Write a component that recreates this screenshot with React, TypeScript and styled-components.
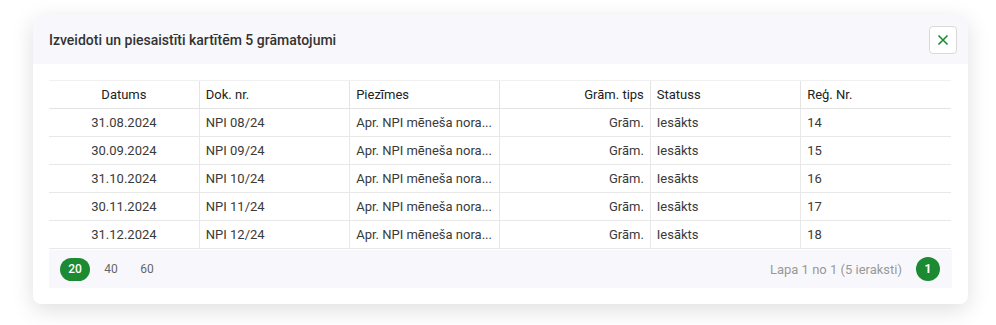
import React from "react";
import styled, { createGlobalStyle } from "styled-components";

const GlobalStyle = createGlobalStyle`
  html, body {
    margin: 0;
    padding: 0;
    background: #ffffff;
    font-family: Roboto, "Liberation Sans", Arial, sans-serif;
    color: #333333;
  }
  * { box-sizing: border-box; }
`;

const Page = styled.div`
  padding: 15px 28px 0 33px;
  width: 996px;
  height: 325px;
`;

const Dialog = styled.div`
  width: 935px;
  background: #ffffff;
  border-radius: 8px;
  box-shadow: 0 6px 22px rgba(0, 0, 0, 0.13);
  overflow: hidden;
`;

const Header = styled.div`
  height: 49px;
  display: flex;
  align-items: center;
  justify-content: space-between;
  padding: 0 11px 0 16px;
  background: #f8f8fc;
`;

const Title = styled.h2`
  margin: 0;
  font-size: 14px;
  font-weight: 500;
  color: #333333;
`;

const CloseButton = styled.button`
  width: 28px;
  height: 28px;
  display: flex;
  align-items: center;
  justify-content: center;
  padding: 0;
  border: 1px solid #d9d9d9;
  border-radius: 4px;
  background: #ffffff;
  cursor: pointer;
`;

const Body = styled.div`
  padding: 16px;
`;

const Table = styled.table`
  width: 902px;
  border-collapse: collapse;
  table-layout: fixed;
  font-size: 13px;
`;

type Align = "left" | "center" | "right";

const Th = styled.th<{ $align: Align }>`
  height: 28px;
  padding: 0 6px;
  font-weight: 400;
  color: #222222;
  text-align: ${({ $align }) => $align};
  border-top: 1px solid #f0f0f0;
  border-bottom: 1px solid #e4e4e4;
  & + & { border-left: 1px solid #e4e4e4; }
`;

const Td = styled.td<{ $align: Align }>`
  height: 28px;
  padding: 0 6px;
  color: #3a3a3a;
  text-align: ${({ $align }) => $align};
  white-space: nowrap;
  overflow: hidden;
  text-overflow: ellipsis;
  border-bottom: 1px solid #e8e8e8;
  & + & { border-left: 1px solid #e8e8e8; }
`;

const Pager = styled.div`
  margin-top: 1px;
  height: 38px;
  display: flex;
  align-items: center;
  justify-content: space-between;
  padding: 0 12px 0 11px;
  background: #f8f8fc;
`;

const Sizes = styled.div`
  display: flex;
  align-items: center;
  gap: 6px;
`;

const SizeButton = styled.span<{ $active?: boolean }>`
  width: 30px;
  height: 23px;
  display: flex;
  align-items: center;
  justify-content: center;
  border-radius: 12px;
  font-size: 12px;
  color: ${({ $active }) => ($active ? "#ffffff" : "#666666")};
  background: ${({ $active }) => ($active ? "#1b8a32" : "transparent")};
  font-weight: ${({ $active }) => ($active ? 500 : 400)};
`;

const PageInfo = styled.div`
  display: flex;
  align-items: center;
  gap: 14px;
  font-size: 13px;
  color: #999999;
`;

const PageNumber = styled.span`
  width: 24px;
  height: 24px;
  border-radius: 50%;
  display: flex;
  align-items: center;
  justify-content: center;
  background: #1b8a32;
  color: #ffffff;
  font-size: 12px;
  font-weight: 700;
`;

const columns: { title: string; align: Align }[] = [
  { title: "Datums", align: "center" },
  { title: "Dok. nr.", align: "left" },
  { title: "Piezīmes", align: "left" },
  { title: "Grām. tips", align: "right" },
  { title: "Statuss", align: "left" },
  { title: "Reģ. Nr.", align: "left" },
];

const rows = [
  ["31.08.2024", "NPI 08/24", "14"],
  ["30.09.2024", "NPI 09/24", "15"],
  ["31.10.2024", "NPI 10/24", "16"],
  ["30.11.2024", "NPI 11/24", "17"],
  ["31.12.2024", "NPI 12/24", "18"],
];

const App = () => (
  <>
    <GlobalStyle />
    <Page>
      <Dialog>
        <Header>
          <Title>Izveidoti un piesaistīti kartītēm 5 grāmatojumi</Title>
          <CloseButton aria-label="Aizvērt">
            <svg width="12" height="12" viewBox="0 0 12 12">
              <path d="M1.5 1.5 L10.5 10.5 M10.5 1.5 L1.5 10.5" stroke="#1b8a32" strokeWidth="1.6" fill="none" />
            </svg>
          </CloseButton>
        </Header>
        <Body>
          <Table>
            <thead>
              <tr>
                {columns.map((c) => (
                  <Th key={c.title} $align={c.align}>{c.title}</Th>
                ))}
              </tr>
            </thead>
            <tbody>
              {rows.map(([date, doc, reg]) => (
                <tr key={doc}>
                  <Td $align="center">{date}</Td>
                  <Td $align="left">{doc}</Td>
                  <Td $align="left">Apr. NPI mēneša nora...</Td>
                  <Td $align="right">Grām.</Td>
                  <Td $align="left">Iesākts</Td>
                  <Td $align="left">{reg}</Td>
                </tr>
              ))}
            </tbody>
          </Table>
          <Pager>
            <Sizes>
              <SizeButton $active>20</SizeButton>
              <SizeButton>40</SizeButton>
              <SizeButton>60</SizeButton>
            </Sizes>
            <PageInfo>
              Lapa 1 no 1 (5 ieraksti)
              <PageNumber>1</PageNumber>
            </PageInfo>
          </Pager>
        </Body>
      </Dialog>
    </Page>
  </>
);

export default App;
